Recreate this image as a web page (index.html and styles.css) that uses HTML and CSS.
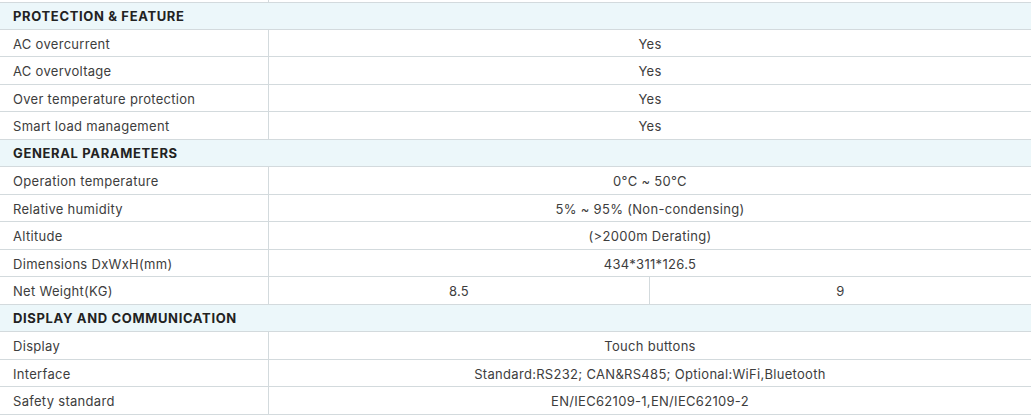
FILE: index.html
```html
<!DOCTYPE html>
<html lang="en">
<head>
<meta charset="utf-8">
<title>Specifications</title>
<link rel="stylesheet" href="styles.css">
</head>
<body>
<div class="spec">
  <div class="stub"><div class="label"></div><div class="value"></div></div>

  <div class="section">PROTECTION &amp; FEATURE</div>
  <div class="row"><div class="label">AC overcurrent</div><div class="value">Yes</div></div>
  <div class="row"><div class="label">AC overvoltage</div><div class="value">Yes</div></div>
  <div class="row"><div class="label">Over temperature protection</div><div class="value">Yes</div></div>
  <div class="row"><div class="label">Smart load management</div><div class="value">Yes</div></div>

  <div class="section">GENERAL PARAMETERS</div>
  <div class="row"><div class="label">Operation temperature</div><div class="value">0°C ~ 50°C</div></div>
  <div class="row"><div class="label">Relative humidity</div><div class="value">5% ~ 95% (Non-condensing)</div></div>
  <div class="row"><div class="label">Altitude</div><div class="value">(&gt;2000m Derating)</div></div>
  <div class="row"><div class="label">Dimensions DxWxH(mm)</div><div class="value">434*311*126.5</div></div>
  <div class="row"><div class="label">Net Weight(KG)</div><div class="value split"><span>8.5</span><span>9</span></div></div>

  <div class="section">DISPLAY AND COMMUNICATION</div>
  <div class="row"><div class="label">Display</div><div class="value">Touch buttons</div></div>
  <div class="row"><div class="label">Interface</div><div class="value">Standard:RS232; CAN&amp;RS485; Optional:WiFi,Bluetooth</div></div>
  <div class="row"><div class="label">Safety standard</div><div class="value">EN/IEC62109-1,EN/IEC62109-2</div></div>
</div>
</body>
</html>
```
FILE: styles.css
```css
html, body {
  margin: 0;
  padding: 0;
  background: #ffffff;
}

.spec {
  width: 1031px;
  font-family: "Inter", "Noto Sans", sans-serif;
  font-size: 13px;
  letter-spacing: 0.3px;
  color: #3d3d3d;
}

.stub {
  display: grid;
  grid-template-columns: 269px 1fr;
  height: 2px;
}

.stub .label {
  border-right: 1px solid #d3dadd;
}

.section {
  height: 27.5px;
  box-sizing: border-box;
  border-top: 1px solid #d3dadd;
  border-bottom: 1px solid #d3dadd;
  background: #ecf7fa;
  display: flex;
  align-items: center;
  padding-left: 13px;
  font-weight: 700;
  letter-spacing: 0.65px;
  color: #222222;
}

.row {
  display: grid;
  grid-template-columns: 269px 1fr;
  height: 27.5px;
  box-sizing: border-box;
  border-bottom: 1px solid #d3dadd;
}

.row + .section {
  border-top: none;
}

.label {
  border-right: 1px solid #d3dadd;
  padding-left: 13px;
  padding-top: 2px;
  display: flex;
  align-items: center;
}

.value {
  display: flex;
  align-items: center;
  justify-content: center;
  padding-top: 2px;
}

.split {
  display: grid;
  grid-template-columns: 1fr 1fr;
  align-items: stretch;
  padding-top: 0;
}

.split span {
  display: flex;
  align-items: center;
  justify-content: center;
  padding-top: 2px;
}

.split span:first-child {
  border-right: 1px solid #d3dadd;
}
```
